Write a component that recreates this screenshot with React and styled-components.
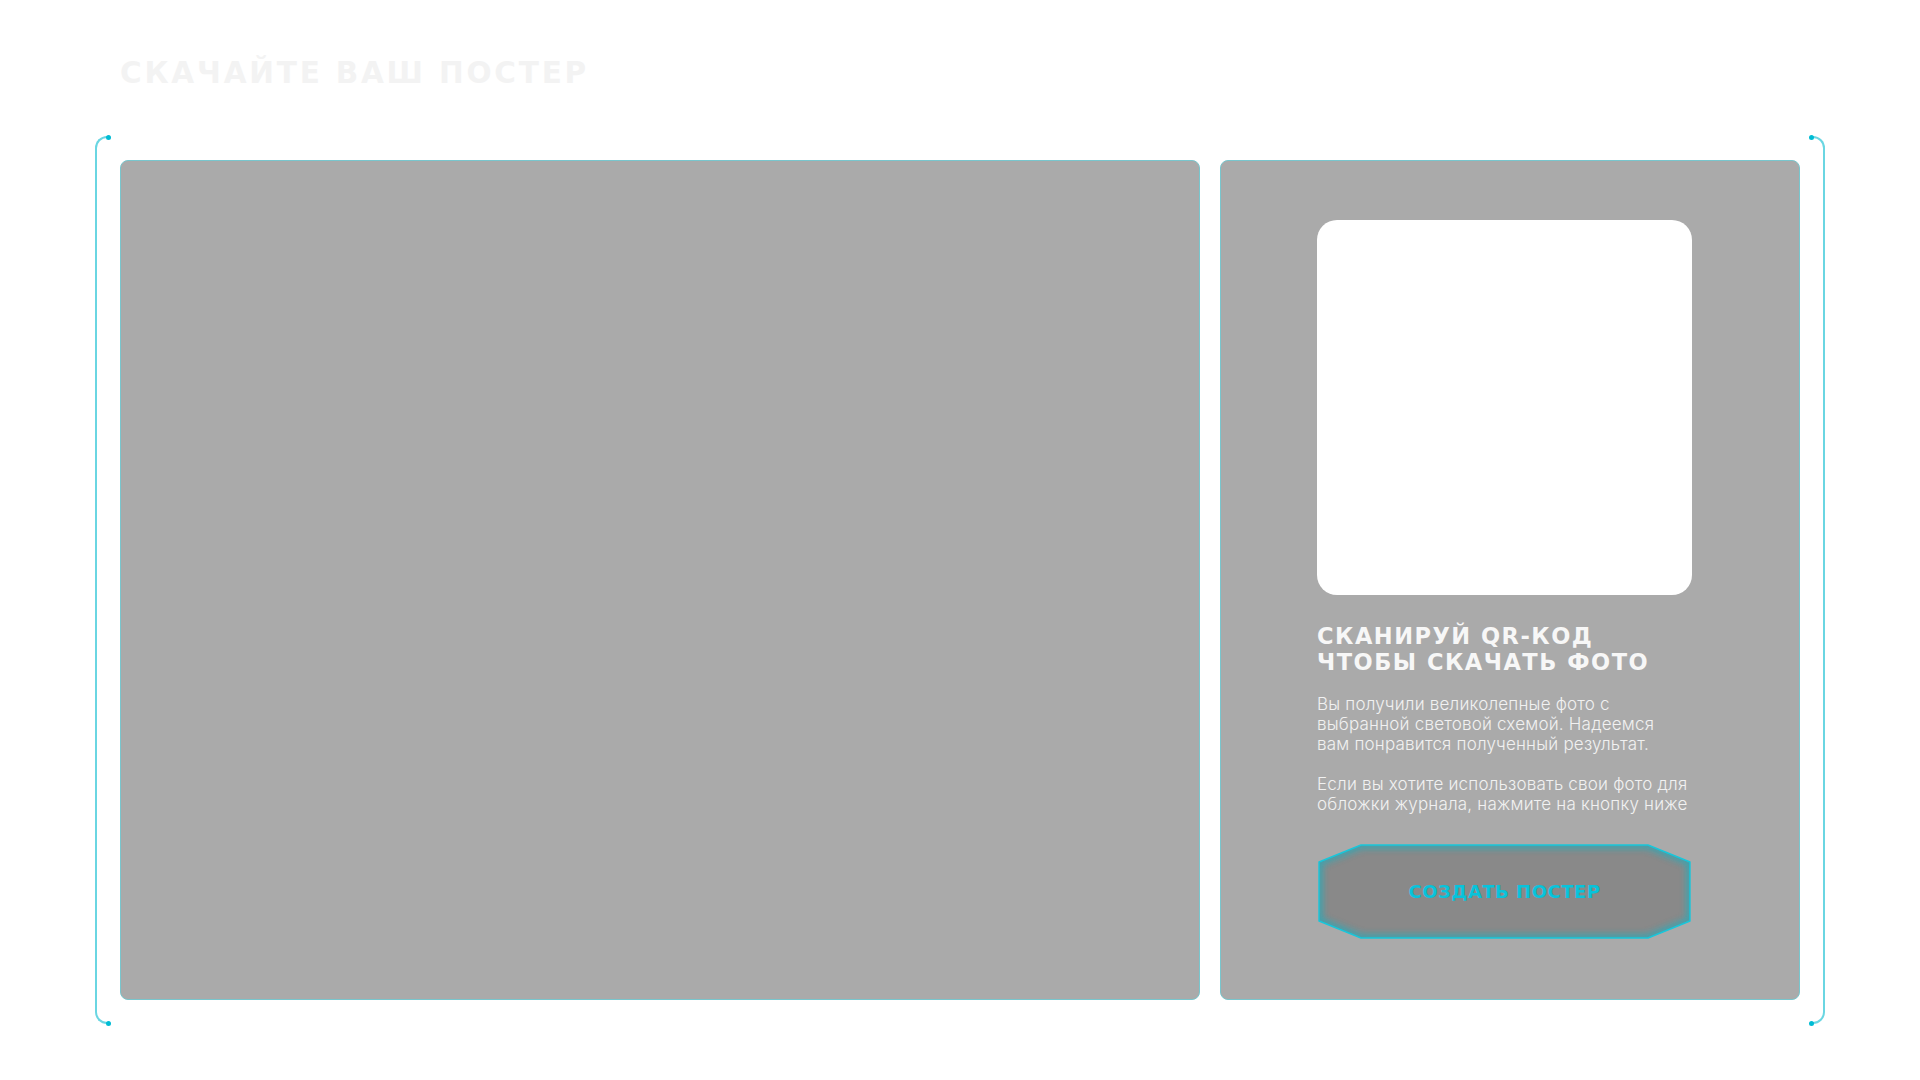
import React from "react";
import styled, { createGlobalStyle } from "styled-components";

const Global = createGlobalStyle`
  html, body { margin: 0; padding: 0; background: #ffffff; }
  body { font-family: "Inter", "Liberation Sans", sans-serif; }
  * { box-sizing: border-box; }
`;

const CYAN_LINE = "#6ad6e2";
const CYAN_DOT = "#00bcd4";

const Page = styled.div`
  width: 1920px;
  height: 1080px;
  padding-top: 55px;
  overflow: hidden;
`;

const Title = styled.h1`
  margin: 0 0 0 120px;
  font-family: "DejaVu Sans", "Liberation Sans", sans-serif;
  font-weight: 700;
  font-size: 29.5px;
  line-height: 36px;
  letter-spacing: 2.8px;
  color: #f3f3f3;
  text-transform: uppercase;
`;

const Frame = styled.div`
  margin: 45px 0 0 95px;
  display: flex;
  gap: 12px;
  align-items: stretch;
`;

const Bracket = styled.div`
  position: relative;
  width: 13px;
  border: 2px solid ${CYAN_LINE};
  ${(p) =>
    p.$side === "left"
      ? "border-right: none; border-radius: 12px 0 0 12px;"
      : "border-left: none; border-radius: 0 12px 12px 0;"}

  &::before,
  &::after {
    content: "";
    position: absolute;
    width: 5px;
    height: 5px;
    border-radius: 50%;
    background: ${CYAN_DOT};
    ${(p) => (p.$side === "left" ? "right: -3px;" : "left: -3px;")}
  }
  &::before { top: -3.5px; }
  &::after { bottom: -3.5px; }
`;

const PanelRow = styled.div`
  display: flex;
  gap: 20px;
  margin: 24px 0;
  height: 840px;
`;

const Panel = styled.div`
  width: ${(p) => p.$w}px;
  height: 100%;
  background: #aaaaaa;
  border: 1px solid #78c6cd;
  border-radius: 8px;
`;

const SidePanel = styled(Panel)`
  display: flex;
  flex-direction: column;
  padding: 59px 0 0 96px;
`;

const QrBox = styled.div`
  width: 375px;
  height: 375px;
  background: #ffffff;
  border-radius: 20px;
`;

const Heading = styled.h2`
  margin: 28px 0 0;
  font-family: "DejaVu Sans", "Liberation Sans", sans-serif;
  font-weight: 700;
  font-size: 22.5px;
  line-height: 26px;
  letter-spacing: 1.5px;
  color: #f7f7f7;
  text-transform: uppercase;
`;

const Text = styled.p`
  margin: ${(p) => p.$mt}px 0 0;
  font-family: "Inter", "Liberation Sans", sans-serif;
  font-weight: 300;
  font-size: 17px;
  line-height: 20px;
  letter-spacing: 0.2px;
  color: #f1f1f1;
  white-space: nowrap;
`;

const Button = styled.button`
  position: relative;
  margin-top: 30px;
  width: 375px;
  height: 95px;
  padding: 0;
  border: none;
  background: transparent;
  cursor: pointer;
  display: flex;
  align-items: center;
  justify-content: center;
`;

const ButtonShape = styled.svg`
  position: absolute;
  inset: 0;
`;

const ButtonLabel = styled.span`
  position: relative;
  font-family: "DejaVu Sans", "Liberation Sans", sans-serif;
  font-weight: 700;
  font-size: 18px;
  letter-spacing: 0.5px;
  color: #08c3db;
  text-transform: uppercase;
`;

const PTS = "44,1 331,1 373,18 373,77 331,94 44,94 2,77 2,18";

function PosterButton() {
  return (
    <Button>
      <ButtonShape width="375" height="95" viewBox="0 0 375 95">
        <defs>
          <clipPath id="btnClip">
            <polygon points={PTS} />
          </clipPath>
          <filter id="btnBlur" x="-10%" y="-10%" width="120%" height="120%">
            <feGaussianBlur stdDeviation="3" />
          </filter>
        </defs>
        <polygon points={PTS} fill="#898989" />
        <g clipPath="url(#btnClip)">
          <polygon
            points={PTS}
            fill="none"
            stroke="#22adbd"
            strokeWidth="8"
            filter="url(#btnBlur)"
            opacity="0.7"
          />
        </g>
        <polygon
          points={PTS}
          fill="none"
          stroke="#18c6da"
          strokeWidth="1.4"
          strokeLinejoin="round"
        />
      </ButtonShape>
      <ButtonLabel>Создать постер</ButtonLabel>
    </Button>
  );
}

export default function App() {
  return (
    <>
      <Global />
      <Page>
        <Title>Скачайте ваш постер</Title>
        <Frame>
          <Bracket $side="left" />
          <PanelRow>
            <Panel $w={1080} />
            <SidePanel $w={580}>
              <QrBox />
              <Heading>
                Сканируй QR-код
                <br />
                чтобы скачать фото
              </Heading>
              <Text $mt={19}>
                Вы получили великолепные фото с
                <br />
                выбранной световой схемой. Надеемся
                <br />
                вам понравится полученный результат.
              </Text>
              <Text $mt={20}>
                Если вы хотите использовать свои фото для
                <br />
                обложки журнала, нажмите на кнопку ниже
              </Text>
              <PosterButton />
            </SidePanel>
          </PanelRow>
          <Bracket $side="right" />
        </Frame>
      </Page>
    </>
  );
}
